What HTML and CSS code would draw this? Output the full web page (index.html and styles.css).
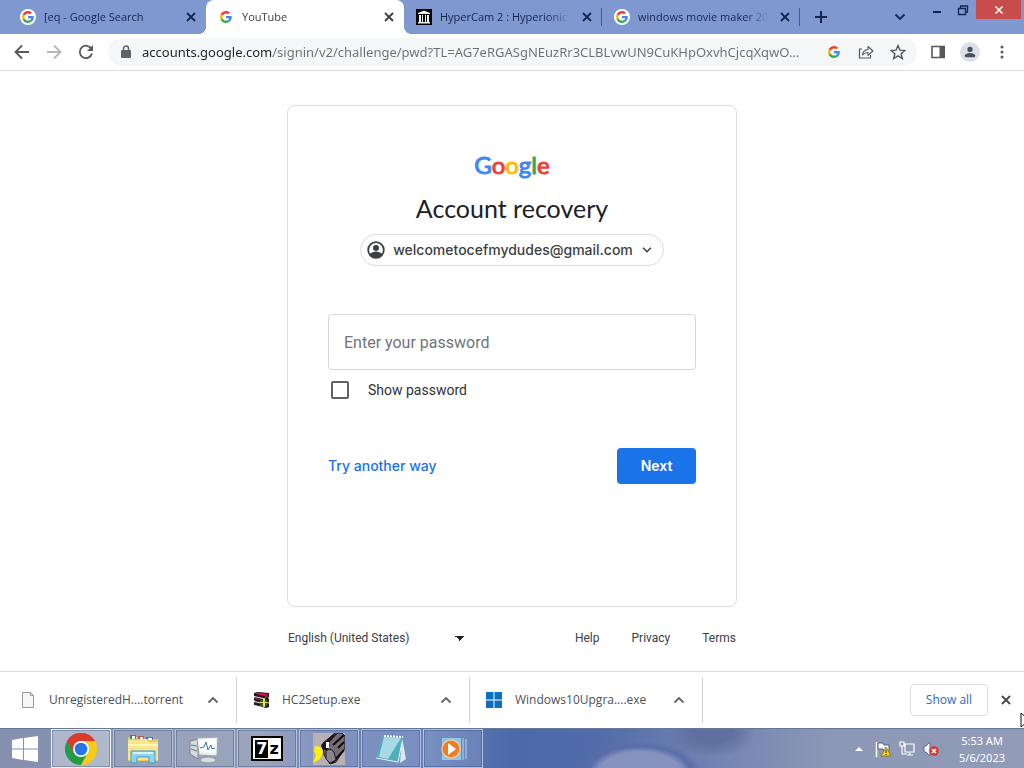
FILE: index.html
```html
<!DOCTYPE html>
<html lang="en">
<head>
<meta charset="utf-8">
<meta name="viewport" content="width=device-width, initial-scale=1">
<title>YouTube</title>
<link rel="stylesheet" href="styles.css">
</head>
<body>
<svg class="sprite" aria-hidden="true">
  <symbol id="g" viewBox="0 0 48 48">
    <path fill="#ea4335" d="M24 9.500c3.540 0 6.710 1.220 9.210 3.600l6.850-6.850C35.900 2.380 30.470 0 24 0 14.620 0 6.510 5.380 2.560 13.220l7.980 6.190C12.430 13.720 17.740 9.500 24 9.500z"/>
    <path fill="#4285f4" d="M46.980 24.550c0-1.570-.15-3.090-.38-4.550H24v9.020h12.940c-.58 2.960-2.260 5.480-4.780 7.180l7.730 6c4.510-4.180 7.090-10.360 7.090-17.650z"/>
    <path fill="#fbbc05" d="M10.530 28.590c-.48-1.450-.76-2.990-.76-4.590s.27-3.140.76-4.590l-7.980-6.190C.92 16.460 0 20.120 0 24s.92 7.540 2.560 10.780l7.970-6.190z"/>
    <path fill="#34a853" d="M24 48c6.480 0 11.930-2.130 15.890-5.810l-7.730-6c-2.150 1.450-4.920 2.300-8.160 2.300-6.260 0-11.570-4.220-13.470-9.910l-7.980 6.190C6.510 42.620 14.620 48 24 48z"/>
  </symbol>
  <symbol id="x" viewBox="0 0 16 16"><path d="M4 4l8 8M12 4l-8 8" fill="none" stroke="currentColor" stroke-width="1.800"/></symbol>
  <symbol id="up" viewBox="0 0 16 16"><path d="M3.500 10.500L8 6l4.500 4.500" fill="none" stroke="currentColor" stroke-width="1.800"/></symbol>
  <symbol id="down" viewBox="0 0 16 16"><path d="M3.500 5.500L8 10l4.500-4.500" fill="none" stroke="currentColor" stroke-width="1.800"/></symbol>
</svg>

<header class="tabstrip">
  <div class="tabs" role="tablist">
    <div class="tab" role="tab">
      <span class="favicon round"><svg><use href="#g"/></svg></span>
      <span class="tab-title">[eq - Google Search</span>
      <button class="tab-close" aria-label="Close tab"><svg><use href="#x"/></svg></button>
    </div>
    <div class="tab active" role="tab" aria-selected="true">
      <span class="favicon"><svg><use href="#g"/></svg></span>
      <span class="tab-title">YouTube</span>
      <button class="tab-close" aria-label="Close tab"><svg><use href="#x"/></svg></button>
    </div>
    <div class="tab divided" role="tab">
      <span class="favicon"><svg class="full" viewBox="0 0 16 16"><path fill="#000" d="M0 0h16v16H0z"/><path fill="#eee" d="M2 4l6-2.500L14 4v1H2zM3 6h2v7H3zM6 6h1v7H6zM9 6h1v7H9zM11 6h2v7h-2zM2 13h12v1.500H2z"/></svg></span>
      <span class="tab-title">HyperCam 2 : Hyperionic</span>
      <button class="tab-close" aria-label="Close tab"><svg><use href="#x"/></svg></button>
    </div>
    <div class="tab divided" role="tab">
      <span class="favicon round"><svg><use href="#g"/></svg></span>
      <span class="tab-title">windows movie maker 20</span>
      <button class="tab-close" aria-label="Close tab"><svg><use href="#x"/></svg></button>
    </div>
    <button class="new-tab" aria-label="New tab"><svg viewBox="0 0 16 16"><path d="M8 2v12M2 8h12" stroke="currentColor" stroke-width="2"/></svg></button>
  </div>
  <div class="window-controls">
    <button class="tab-search" aria-label="Search tabs"><svg><use href="#down"/></svg></button>
    <button class="win" aria-label="Minimize"><svg viewBox="0 0 12 12"><path d="M2 8h8" stroke="currentColor" stroke-width="2"/></svg></button>
    <button class="win" aria-label="Restore"><svg viewBox="0 0 12 12"><path d="M1.500 4.500h7v6h-7zM3.500 4V2h7v6H9" fill="none" stroke="currentColor" stroke-width="1.300"/></svg></button>
    <button class="win close" aria-label="Close"><svg viewBox="0 0 12 12"><path d="M2.500 2.500l7 7M9.500 2.500l-7 7" stroke="currentColor" stroke-width="1.600"/></svg></button>
  </div>
</header>

<nav class="toolbar" aria-label="Browser">
  <button class="tool" aria-label="Back"><svg viewBox="0 0 16 16"><path d="M15 8H2M8 1.500L1.500 8 8 14.500" fill="none" stroke="currentColor" stroke-width="1.800"/></svg></button>
  <button class="tool disabled" aria-label="Forward"><svg viewBox="0 0 16 16"><path d="M1 8h13M8 1.500L14.500 8 8 14.500" fill="none" stroke="currentColor" stroke-width="1.800"/></svg></button>
  <button class="tool" aria-label="Reload"><svg viewBox="0 0 16 16"><path d="M13.500 5A6.200 6.200 0 1 0 14 9.500" fill="none" stroke="currentColor" stroke-width="1.800"/><path d="M15 1v6H9z" fill="currentColor"/></svg></button>
  <div class="omnibox">
    <svg class="lock" viewBox="0 0 10 14"><path d="M1 5h8q1 0 1 1v6q0 1-1 1H1q-1 0-1-1V6q0-1 1-1z" fill="#5f6368"/><path d="M2.500 6V3.500a2.500 2.500 0 0 1 5 0V6" fill="none" stroke="#5f6368" stroke-width="1.500"/></svg>
    <input class="url" type="text" aria-label="Address" value="accounts.google.com/signin/v2/challenge/pwd?TL=AG7eRGASgNEuzRr3CLBLvwUN9CuKHpOxvhCjcqXqwO...">
    <button class="tool small" aria-label="Google"><svg><use href="#g"/></svg></button>
    <button class="tool" aria-label="Share"><svg viewBox="0 0 16 16"><path d="M4 5H1.500v9h11v-3" fill="none" stroke="currentColor" stroke-width="1.200"/><path d="M4.500 11q.5-5 5.500-5.500V2.500l5 4.500-5 4.300V8.500q-3.500 0-5.500 2.500z" fill="none" stroke="currentColor" stroke-width="1.100" stroke-linejoin="round"/></svg></button>
    <button class="tool" aria-label="Bookmark"><svg viewBox="0 0 16 16"><path d="M8 1.500l1.900 4.600 5 .4-3.800 3.200 1.200 4.800L8 11.900l-4.300 2.600 1.200-4.800L1.100 6.500l5-.4z" fill="none" stroke="currentColor" stroke-width="1.400"/></svg></button>
  </div>
  <button class="tool" aria-label="Side panel"><svg viewBox="0 0 16 16"><path d="M2 2.500h12v11H2z" fill="none" stroke="currentColor" stroke-width="1.600"/><path d="M9.500 2H15v12H9.500z" fill="currentColor"/></svg></button>
  <button class="tool avatar" aria-label="Profile"><svg viewBox="0 0 16 16"><circle cx="8" cy="5" r="3" fill="#4a4f5c"/><path d="M2 14v-2q1-3 6-3t6 3v2z" fill="#4a4f5c"/></svg></button>
  <button class="tool" aria-label="Menu"><svg viewBox="0 0 16 16" fill="currentColor"><circle cx="8" cy="3" r="1.500"/><circle cx="8" cy="8" r="1.500"/><circle cx="8" cy="13" r="1.500"/></svg></button>
</nav>

<main class="page">
  <form class="card">
    <div class="logo" aria-label="Google"><span class="blue">G</span><span class="red">o</span><span class="yellow">o</span><span class="blue">g</span><span class="green">l</span><span class="red">e</span></div>
    <h1>Account recovery</h1>
    <button class="account" type="button">
      <svg class="person" viewBox="0 0 20 20"><circle cx="10" cy="10" r="7.800" fill="#fff" stroke="#3c4043" stroke-width="1.800"/><circle cx="10" cy="8" r="3" fill="#3c4043"/><path d="M3.500 14q2.500-2.500 6.500-2.500t6.500 2.500Q14 18 10 18t-6.500-4z" fill="#3c4043"/></svg>
      <span>welcometocefmydudes@gmail.com</span>
      <svg class="chev" viewBox="0 0 16 16"><use href="#down"/></svg>
    </button>
    <input class="password" type="password" placeholder="Enter your password" aria-label="Enter your password">
    <div class="show"><input id="show" type="checkbox"><label for="show">Show password</label></div>
    <div class="actions"><a href="#">Try another way</a><button class="next" type="button">Next</button></div>
  </form>
  <footer class="legal">
    <select class="language" aria-label="Language"><option>English (United States)</option></select>
    <div class="links"><a href="#">Help</a><a href="#">Privacy</a><a href="#">Terms</a></div>
  </footer>
</main>

<section class="downloads" aria-label="Downloads">
  <div class="download">
    <svg class="file" viewBox="0 0 16 16"><path d="M2.500.5h8l3 3v12h-11z" fill="#f6f6f6" stroke="#999"/><path d="M10.500.5v3h3" fill="none" stroke="#999"/></svg>
    <span>UnregisteredH....torrent</span>
    <button aria-label="Options"><svg><use href="#up"/></svg></button>
  </div>
  <div class="download">
    <svg class="file" viewBox="0 0 16 16"><path d="M1 1l4-1 11 1v4l-1 1 1 1v3l-1 1 1 1v3l-3 1-12-3v-3l1-1-1-1V6l1-1-1-1z" fill="#29151c"/><path d="M2 2l4-1 9 1-3 2z" fill="#d51c49"/><path d="M1 4l9 2v1L1 5zM1 9l9 2v1l-9-2zM1 13l9 2v1L1 14z" fill="#efe9ee"/><path d="M2 6l8 2v1L2 7z" fill="#7b286b"/><path d="M12 4l3-1v2l-3 1z" fill="#b51d40"/><path d="M7 8h7v6H7z" fill="#226a2e"/><path d="M10 6h2v9h-2zM7 10h8v1H7z" fill="#e7d86a"/></svg>
    <span>HC2Setup.exe</span>
    <button aria-label="Options"><svg><use href="#up"/></svg></button>
  </div>
  <div class="download">
    <svg class="file" viewBox="0 0 16 16"><path d="M0 0h7.500v7.500H0zM8.500 0H16v7.500H8.500zM0 8.500h7.500V16H0zM8.500 8.500H16V16H8.500z" fill="#0b6fc2"/></svg>
    <span>Windows10Upgra....exe</span>
    <button aria-label="Options"><svg><use href="#up"/></svg></button>
  </div>
  <div class="shelf-end">
    <button class="show-all">Show all</button>
    <button class="shelf-close" aria-label="Close"><svg><use href="#x"/></svg></button>
  </div>
</section>

<footer class="taskbar">
  <button class="start" aria-label="Start"><svg viewBox="0 0 28 28"><path d="M1 5l11-2v10.500H1zM13 3l14-2v12.500H13zM1 14.500h11V25L1 23zM13 14.500h14V27l-14-2z" fill="#fff"/></svg></button>
  <button class="app current" aria-label="Chrome"><svg viewBox="0 0 32 32"><path d="M16 16L2.140 8A16 16 0 0 1 29.860 8z" fill="#db3b2c"/><path d="M16 16L2.140 8A16 16 0 0 0 16 32L23 20z" fill="#259b45"/><path d="M16 16l-2-8h15.860A16 16 0 0 1 16 32l6.900-12z" fill="#fbc918"/><path d="M16 8h13.860A16 16 0 0 0 2.140 8l6.930 12z" fill="#db3b2c"/><circle cx="16" cy="16" r="8" fill="#fff"/><circle cx="16" cy="16" r="6.300" fill="#2673e8"/></svg></button>
  <button class="app" aria-label="File Explorer"><svg viewBox="0 0 32 32"><path d="M1 4h9l2 2h19v22H1z" fill="#e8c95b"/><path d="M3 2h6v4H3z" fill="#3d8c48"/><path d="M11 3h6v3h-6z" fill="#c9503b"/><path d="M19 4h7v3h-7z" fill="#3b7cc0"/><path d="M5 3h3v3H5zM13 4h3v2h-3zM21 5h4v2h-4z" fill="#fff"/><path d="M1 7h11l2-1h6l2 3h9v18H1z" fill="#f9e58f"/><path d="M1 12h30" stroke="#fff4bd" stroke-width="2"/><path d="M4 30V18h24v12h-6v-6H10v6z" fill="#8fd3f1" stroke="#3d9bcd"/><path d="M6 20h20" stroke="#d7f3ff" stroke-width="2"/></svg></button>
  <button class="app" aria-label="Resource monitor"><svg viewBox="0 0 32 32"><path d="M1 8l8-2v20l-8-5z" fill="#d5dadd" stroke="#78858c"/><path d="M2 12l6 1M2 16l6 2" stroke="#68767d"/><path d="M8 5l21-1-1 19-18-1z" fill="#eceff0" stroke="#9ca5aa"/><path d="M10 7l17-1-1 14-15-1z" fill="#fff"/><path d="M11 15l4-1 2-5 2 8 3-5 1 4 3-1" fill="none" stroke="#397393"/><ellipse cx="19" cy="27" rx="8" ry="3" fill="#d7dcdf" stroke="#8c979d"/></svg></button>
  <button class="app" aria-label="7-Zip"><span class="zip"><b>7</b><i>z</i></span></button>
  <button class="app" aria-label="HyperCam"><svg viewBox="0 0 32 32"><path d="M0 0h32v32H0z" fill="#b7b1b4"/><path d="M10 10L22 0h7l3 3v12L23 29l-6 2-6-9z" fill="#746d75" stroke="#171519"/><path d="M12 11l9-9M20 12L31 2M25 15l6-6M19 30l12-13" stroke="#0d0c0e" stroke-width="2"/><path d="M15 8l5-6 5-2-9 10z" fill="#211e23"/><path d="M8 12l5-4 4 4-3 6-5-2z" fill="#18161a"/><path d="M13 9h3v6h-3z" fill="#fff"/><path d="M13 18q4-4 8 1l2 8-6 3-4-4z" fill="#8b858b" stroke="#1c191d"/><path d="M2 13l6 1 2 5-3 7-7 4 3-8-2-4z" fill="#fff300"/></svg></button>
  <button class="app" aria-label="Notepad"><svg viewBox="0 0 32 32"><path d="M27 4l4 22-6 4z" fill="#dce7eb"/><path d="M9 3l19 1-5 25-22-5z" fill="#4eaebc"/><path d="M9 4l17 1-13 21-9-2z" fill="#a7dae2"/><path d="M9 3l19 1" stroke="#eff7f8" stroke-width="2" stroke-dasharray="2 1"/><path d="M1 25l22 4 4-20" fill="none" stroke="#e6f1f3"/></svg></button>
  <button class="app" aria-label="Media Player"><svg viewBox="0 0 32 32"><path d="M5 5h19v22H5z" fill="#8cc8ea"/><path d="M26 5v22M29 6v20" stroke="#b4d8ef"/><circle cx="14" cy="16" r="9" fill="#ed7c27" stroke="#f8c194" stroke-width="1.500"/><path d="M11 10l8 6-8 6z" fill="#fff"/></svg></button>
  <div class="tray">
    <svg class="tray-up" viewBox="0 0 8 8"><path d="M0 6l4-4 4 4z" fill="#fff"/></svg>
    <svg viewBox="0 0 16 16"><path d="M1.500 1v15" stroke="#fff" stroke-width="1.500"/><path d="M3 2h5l1 2h5v6H9L8 8H3z" fill="#f7f9ff" stroke="#56617f"/><path d="M11 6l5 9H6z" fill="#f6d51c" stroke="#927d18"/><path d="M11 9v3M11 13v1" stroke="#332c11"/></svg>
    <svg viewBox="0 0 16 16" fill="none" stroke="#fff" stroke-width="1.200"><path d="M6 3h9v8H6zM8 14h6M10.500 11v3M1 1h4v4H1zM3 5v8h5"/></svg>
    <svg viewBox="0 0 16 16"><path d="M1 5h2l4-4v14l-4-4H1z" fill="#f5f7fc" stroke="#5f6d91"/><circle cx="11" cy="10" r="4.800" fill="#d73b34"/><path d="M9 8l4 4M13 8l-4 4" stroke="#fff" stroke-width="1.500"/></svg>
    <time class="clock"><span>5:53 AM</span><span>5/6/2023</span></time>
  </div>
</footer>
<svg class="cursor" viewBox="0 0 12 18" aria-hidden="true"><path d="M1 1v14l3.500-3L7 17l2-1-2-5h5z" fill="#fff" stroke="#111"/></svg>
</body>
</html>
```

FILE: styles.css
```css
* { box-sizing: border-box; }
body {
  margin: 0;
  min-height: 100vh;
  display: flex;
  flex-direction: column;
  overflow: hidden;
  position: relative;
  background: #fff;
  color: #202124;
  font-family: "Noto Sans", "Open Sans", sans-serif;
}
button { border: 0; padding: 0; background: none; font: inherit; color: inherit; display: grid; place-items: center; }
a { text-decoration: none; color: inherit; }
svg { width: 16px; height: 16px; flex: none; display: block; }
.sprite { position: absolute; width: 0; height: 0; }

.tabstrip { height: 34px; display: flex; background: #8098d0; color: #14264f; }
.tabs { flex: 1; min-width: 0; display: flex; padding-left: 8px; }
.tab { flex: 0 1 198px; min-width: 0; display: flex; align-items: center; gap: 8px; padding: 0 7px 0 12px; position: relative; }
.tab.active { background: #fff; color: #3c4043; border-radius: 8px 8px 0 0; }
.tab.active::before, .tab.active::after { content: ""; position: absolute; bottom: 0; width: 8px; height: 8px; }
.tab.active::before { right: 100%; background: radial-gradient(circle at 0 0, transparent 8px, #fff 8px); }
.tab.active::after { left: 100%; background: radial-gradient(circle at 100% 0, transparent 8px, #fff 8px); }
.tab.divided::after { content: ""; position: absolute; right: 0; top: 8px; width: 1px; height: 18px; background: #445a91; }
.favicon { width: 16px; height: 16px; display: grid; place-items: center; flex: none; }
.favicon svg { width: 12px; height: 12px; }
.favicon svg.full { width: 16px; height: 16px; }
.favicon.round { background: #fff; border-radius: 50%; }
.tab-title { flex: 1; min-width: 0; overflow: hidden; white-space: nowrap; font: 11px/16px "Open Sans", sans-serif; -webkit-mask-image: linear-gradient(to right, #000 82%, transparent); mask-image: linear-gradient(to right, #000 82%, transparent); }
.new-tab { width: 42px; }
.window-controls { display: flex; align-items: flex-start; padding-right: 3px; }
.tab-search { width: 48px; height: 34px; }
.win { width: 26px; height: 19px; }
.win svg { width: 12px; height: 12px; }
.win.close { width: 45px; background: #c84c4c; color: #fff; }

.toolbar { height: 37px; display: flex; align-items: center; padding: 0 6px; border-bottom: 1px solid #dadce0; color: #55585c; }
.tool { width: 32px; height: 28px; flex: none; }
.tool.disabled { color: #b6b8ba; }
.tool.small svg { width: 12px; height: 12px; }
.omnibox { flex: 1; min-width: 0; height: 28px; margin: 0 5px 0 6px; padding: 0 3px 0 13px; display: flex; align-items: center; border-radius: 14px; background: #f5f6f7; }
.lock { width: 10px; height: 14px; }
.url {
  flex: 1; min-width: 0; height: 24px; border: 0; padding: 0; margin-left: 11px; outline: 0;
  font: 13px/24px "Noto Sans", sans-serif;
  color: transparent;
  background: linear-gradient(to right, #202124 131px, #6b6f74 131px);
  -webkit-background-clip: text; background-clip: text;
}
.tool.avatar svg { background: #dde0e8; border-radius: 50%; width: 20px; height: 20px; padding: 3px; }

.page { flex: 1; display: flex; flex-direction: column; align-items: center; padding: 34px 24px 0; font-family: Roboto, sans-serif; }
.card { width: 100%; max-width: 450px; min-height: 502px; padding: 43px 40px 40px; border: 1px solid #dadce0; border-radius: 8px; display: flex; flex-direction: column; }
.logo { text-align: center; font: 24px/32px Lato, sans-serif; -webkit-text-stroke: 1px currentColor; }
.blue { color: #4285f4; }
.red { color: #ea4335; }
.yellow { color: #fbbc05; }
.green { color: #34a853; }
h1 { margin: 11px 0 10px; text-align: center; font: 25px/32px Lato, sans-serif; }
.account { align-self: center; height: 32px; padding: 0 9px 0 5px; border: 1px solid #dadce0; border-radius: 16px; display: flex; align-items: center; gap: 7px; font: 500 14px/20px Inter, sans-serif; color: #3c4043; }
.person { width: 20px; height: 20px; }
.chev { width: 14px; height: 14px; }
.password { width: 100%; height: 56px; margin: 48px 0 10px; padding: 0 15px; border: 1px solid #d5d7da; border-radius: 4px; font: 16px/24px Roboto, sans-serif; }
.password::placeholder { color: #70757a; opacity: 1; }
.show { display: flex; align-items: center; gap: 19px; height: 20px; padding-left: 3px; font-size: 14px; line-height: 20px; color: #303134; }
.show input { appearance: none; width: 18px; height: 18px; margin: 0; border: 2px solid #5f6368; border-radius: 2px; }
.actions { display: flex; justify-content: space-between; align-items: center; margin-top: 48px; font: 500 14px/20px Inter, sans-serif; }
.actions a { color: #1a73e8; }
.next { width: 79px; height: 36px; border-radius: 4px; background: #1a73e8; color: #fff; font-weight: 600; }
.legal { width: 100%; max-width: 448px; margin-top: 22px; display: flex; justify-content: space-between; font-size: 12px; line-height: 18px; color: #3c4043; }
.language { appearance: none; width: 178px; border: 0; padding: 0; font: inherit; color: inherit; background: linear-gradient(45deg, transparent 50%, #202124 50%) 167px 7px / 5px 5px no-repeat, linear-gradient(-45deg, transparent 50%, #202124 50%) 172px 7px / 5px 5px no-repeat; }
.links { display: flex; gap: 32px; }

.downloads { height: 57px; display: flex; align-items: center; border-top: 1px solid #dadce0; color: #4d5156; font: 12px/20px "Open Sans", sans-serif; }
.download { flex: 0 1 233px; min-width: 0; height: 46px; display: flex; align-items: center; gap: 13px; padding: 0 15px 0 16px; border-right: 1px solid #d0d2d5; white-space: nowrap; }
.download:first-child { flex-basis: 237px; padding-left: 20px; }
.download span { flex: 1; overflow: hidden; }
.download svg { color: #5f6368; }
.shelf-end { margin-left: auto; display: flex; align-items: center; gap: 10px; padding-right: 10px; }
.show-all { width: 78px; height: 32px; border: 1px solid #dadce0; border-radius: 4px; color: #3367c0; }
.shelf-close { color: #44474b; }

.taskbar {
  height: 40px; display: flex; align-items: stretch; gap: 2px; border-top: 1px solid #66779e; color: #fff;
  background:
    radial-gradient(ellipse 62px 34px at 640px 46px, #8593be 68%, #5a6da8 84%, transparent),
    radial-gradient(ellipse 44px 24px at 712px 4px, #5f6f9f 45%, transparent),
    linear-gradient(90deg, #8490ae 0, #8f98b4 260px, #6d82b7 330px, #6680ba 430px, #4c69aa 510px, #526ca9 600px, #7686b3 730px, #8c98b7 830px, #929bb6);
}
.start { width: 49px; }
.start svg { width: 28px; height: 28px; }
.app { width: 60px; height: 39px; border: 1px solid #b4bfd8; background: rgba(255, 255, 255, .12); outline: 1px solid rgba(50, 65, 110, .35); outline-offset: -2px; }
.app svg { width: 32px; height: 32px; }
.app.current { border-color: #eef1f7; background: rgba(255, 255, 255, .34); }
.zip { width: 32px; height: 25px; display: flex; align-items: center; justify-content: center; gap: 1px; background: #fff; border: 2px solid #000; color: #000; font: 16px/18px "DejaVu Sans", sans-serif; }
.zip b { background: #000; color: #fff; padding: 0 1px; }
.zip i { font-style: normal; font-weight: bold; }
.tray { margin-left: auto; display: flex; align-items: center; gap: 8px; padding-right: 19px; }
.tray .tray-up { width: 8px; height: 8px; margin-right: 4px; }
.clock { display: flex; flex-direction: column; align-items: center; margin-left: 12px; font: 11px/17px "Noto Sans", sans-serif; }
.cursor { position: absolute; left: calc(100% - 4px); bottom: 38px; width: 12px; height: 18px; }
```
